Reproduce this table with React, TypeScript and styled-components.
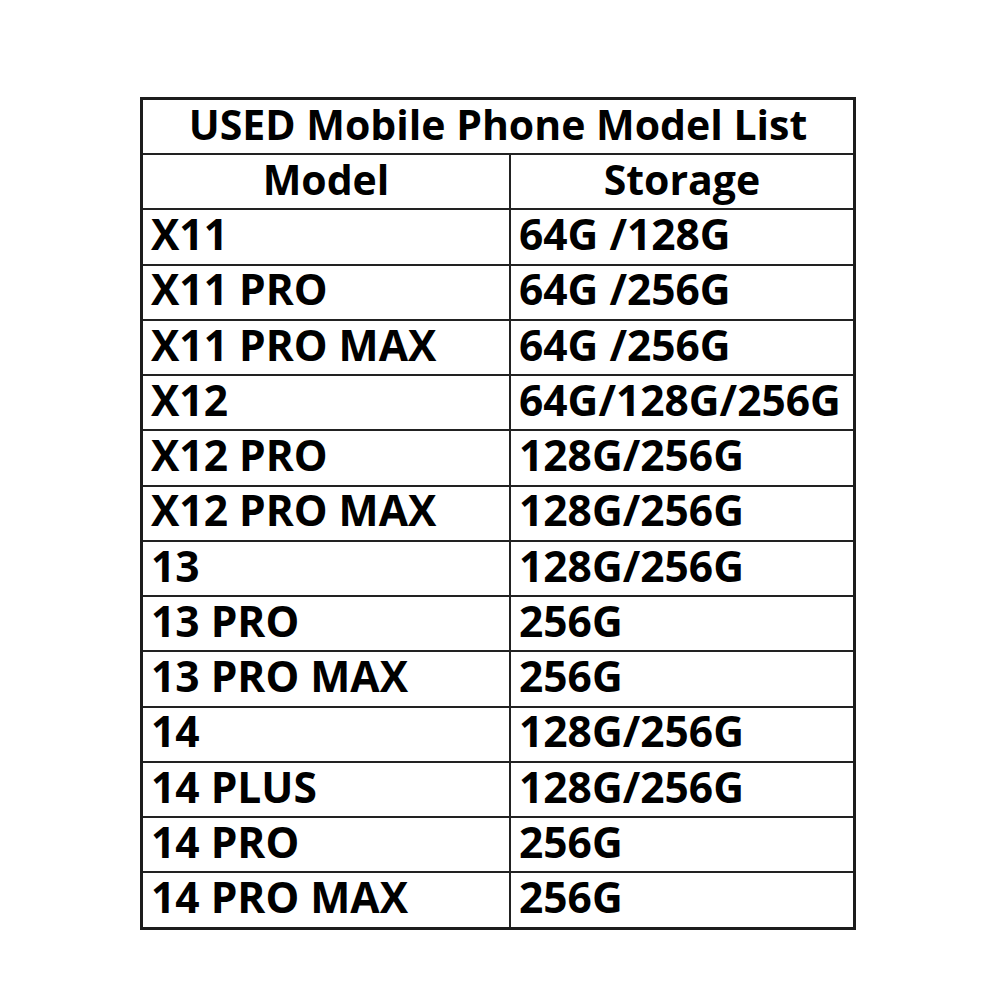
import React from 'react';
import styled, { createGlobalStyle } from 'styled-components';

const GlobalStyle = createGlobalStyle`
  html, body {
    margin: 0;
    padding: 0;
    background: #fff;
  }
  body {
    font-family: "Open Sans", "Noto Sans", sans-serif;
  }
`;

const Page = styled.div`
  width: 1000px;
  height: 1000px;
  padding: 97px 0 0 140px;
  box-sizing: border-box;
`;

const Sheet = styled.div`
  width: 716px;
  border: 3px solid #1c1c1c;
  box-sizing: border-box;
  color: #000;
`;

const Row = styled.div<{ $single?: boolean }>`
  display: grid;
  grid-template-columns: ${(p) => (p.$single ? '1fr' : '366px 1fr')};
  height: 55.25px;
  border-top: 2px solid #222;
  box-sizing: border-box;

  &:first-child {
    border-top: none;
    height: 53px;
  }
`;

const Cell = styled.div<{ $center?: boolean; $divider?: boolean; $small?: boolean }>`
  display: flex;
  align-items: center;
  justify-content: ${(p) => (p.$center ? 'center' : 'flex-start')};
  padding-left: ${(p) => (p.$center ? '0' : '8px')};
  border-left: ${(p) => (p.$divider ? '2px solid #222' : 'none')};
  font-size: ${(p) => (p.$small ? '41px' : '42.5px')};
  font-weight: 700;
  line-height: 1;
  white-space: nowrap;
  padding-bottom: 5px;
`;

const rows: [string, string][] = [
  ['X11', '64G /128G'],
  ['X11 PRO', '64G /256G'],
  ['X11 PRO MAX', '64G /256G'],
  ['X12', '64G/128G/256G'],
  ['X12 PRO', '128G/256G'],
  ['X12 PRO MAX', '128G/256G'],
  ['13', '128G/256G'],
  ['13 PRO', '256G'],
  ['13 PRO MAX', '256G'],
  ['14', '128G/256G'],
  ['14 PLUS', '128G/256G'],
  ['14 PRO', '256G'],
  ['14 PRO MAX', '256G'],
];

export default function App() {
  return (
    <Page>
      <GlobalStyle />
      <Sheet>
        <Row $single>
          <Cell $center $small>USED Mobile Phone Model List</Cell>
        </Row>
        <Row>
          <Cell $center $small>Model</Cell>
          <Cell $center $small $divider>Storage</Cell>
        </Row>
        {rows.map(([model, storage]) => (
          <Row key={model}>
            <Cell>{model}</Cell>
            <Cell $divider>{storage}</Cell>
          </Row>
        ))}
      </Sheet>
    </Page>
  );
}
